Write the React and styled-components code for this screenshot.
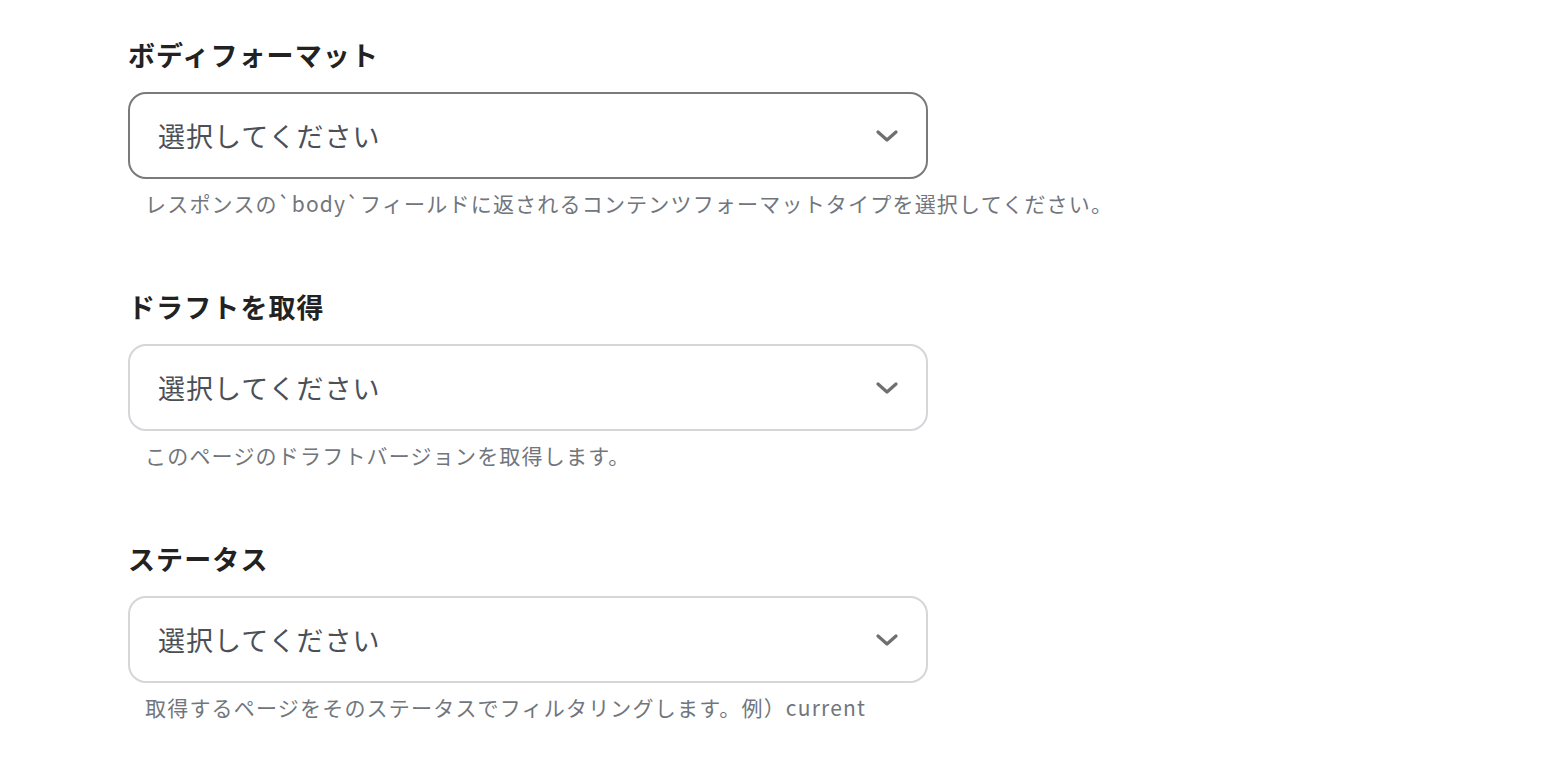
import React from "react";
import styled, { createGlobalStyle } from "styled-components";

const Global = createGlobalStyle`
  html, body { margin: 0; padding: 0; background: #fff; }
  body { font-family: "Noto Sans CJK JP", "Noto Sans", sans-serif; }
`;

const Page = styled.div`
  padding: 37px 0 0 128px;
  display: flex;
  flex-direction: column;
  gap: 71px;
`;

const Field = styled.div`
  display: flex;
  flex-direction: column;
`;

const Label = styled.div`
  font-size: 27px;
  font-weight: 700;
  line-height: 36px;
  color: #222;
  letter-spacing: 1.1px;
  margin-bottom: 19px;
`;

const Select = styled.div`
  box-sizing: border-box;
  width: 800px;
  height: 87px;
  border: 2px solid ${(p) => (p.$active ? "#7a7a7a" : "#d4d6d9")};
  border-radius: 18px;
  display: flex;
  align-items: center;
  justify-content: space-between;
  padding: 0 28px 0 28px;
`;

const Placeholder = styled.span`
  font-size: 27px;
  color: #4b5057;
  letter-spacing: 1px;
`;

const Help = styled.div`
  margin-top: 9px;
  padding-left: 17px;
  font-size: 21px;
  line-height: 30px;
  color: #71767d;
  letter-spacing: 1.2px;
`;

const Chevron = () => (
  <svg width="22" height="14" viewBox="0 0 22 14">
    <path d="M2 3 L11 11 L20 3" fill="none" stroke="#6f6f6f" strokeWidth="3.2" strokeLinecap="round" strokeLinejoin="round" />
  </svg>
);

const fields = [
  { label: "ボディフォーマット", help: "レスポンスの`body`フィールドに返されるコンテンツフォーマットタイプを選択してください。", active: true },
  { label: "ドラフトを取得", help: "このページのドラフトバージョンを取得します。" },
  { label: "ステータス", help: "取得するページをそのステータスでフィルタリングします。例）current" },
];

export default function App() {
  return (
    <>
      <Global />
      <Page>
        {fields.map((f) => (
          <Field key={f.label}>
            <Label>{f.label}</Label>
            <Select $active={f.active}>
              <Placeholder>選択してください</Placeholder>
              <Chevron />
            </Select>
            <Help>{f.help}</Help>
          </Field>
        ))}
      </Page>
    </>
  );
}
